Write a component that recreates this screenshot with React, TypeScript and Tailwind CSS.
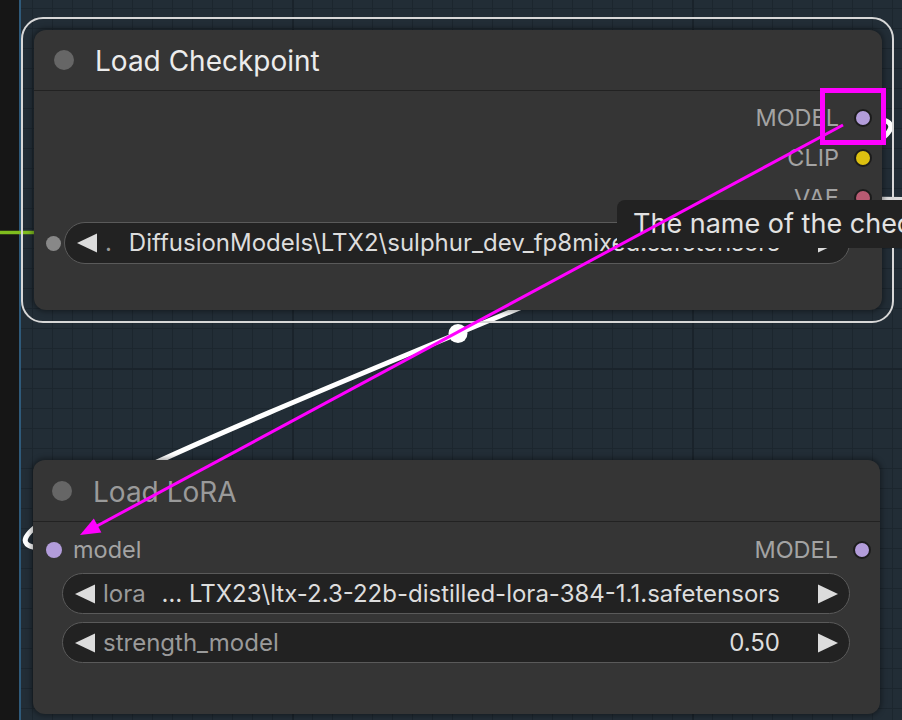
import React from 'react';

const OUTPUTS = [
  { name: 'MODEL', dot: 'bg-[#b39ddb]' },
  { name: 'CLIP', dot: 'bg-[#dcc010]' },
  { name: 'VAE', dot: 'bg-[#b85a72]' },
];

const Tri = ({ dir }: { dir: 'left' | 'right' }) => (
  <svg width="20" height="20" viewBox="0 0 20 20" className="shrink-0">
    {dir === 'left' ? (
      <path d="M0 10 L20 0.5 L20 19.5 Z" fill="#dcdcdc" />
    ) : (
      <path d="M20 10 L0 0.5 L0 19.5 Z" fill="#dcdcdc" />
    )}
  </svg>
);

const Widget = ({ label, value, h }: { label: string; value: string; h: string }) => (
  <div
    className={`flex-1 min-w-0 ${h} rounded-full bg-[#222222] border border-[#5a5a5a] flex items-center pl-[12px] pr-[11px] text-[24px] whitespace-nowrap`}
  >
    <Tri dir="left" />
    <span className="ml-[8px] text-[#9a9a9a] shrink-0">{label}</span>
    <span className="flex-1 min-w-0 ml-[10px] text-right text-[#dddddd] overflow-hidden">{value}</span>
    <span className="ml-[38px] flex">
      <Tri dir="right" />
    </span>
  </div>
);

const OutDot = ({ cls }: { cls: string }) => (
  <span className={`w-[18px] h-[18px] rounded-full border-2 border-[#1c1c1c] shrink-0 ${cls}`} />
);

export default function App() {
  return (
    <div className="relative w-[902px] h-[720px] overflow-hidden flex font-['Inter','Noto_Sans',sans-serif]">
      {/* side strip + canvas grid */}
      <div className="w-[19px] h-full bg-[#161616]" />
      <div className="w-[2px] h-full bg-[#2f5a7a]" />
      <div className="flex-1 h-full bg-[#222d36] [background-image:linear-gradient(to_right,#1a232b_2px,transparent_2px),linear-gradient(to_bottom,#1a232b_2px,transparent_2px),linear-gradient(to_right,#1c262e_1px,transparent_1px),linear-gradient(to_bottom,#1c262e_1px,transparent_1px)] [background-size:400px_400px,400px_400px,20px_20px,20px_20px] [background-position:271px_368px,271px_368px,11px_8px,11px_8px]" />

      {/* links */}
      <svg className="absolute inset-0 pointer-events-none" width="902" height="720">
        <line x1="0" y1="232.5" x2="50" y2="232.5" stroke="#7fbd1e" strokeWidth="3.5" />
        <line x1="863" y1="198.5" x2="902" y2="199" stroke="#dcdcdc" strokeWidth="4" />
        <path d="M 863 118 C 1092 118, -176 549, 53 549" fill="none" stroke="#ffffff" strokeWidth="5" />
        <circle cx="458" cy="333.5" r="9.5" fill="#ffffff" />
      </svg>

      {/* selection outline */}
      <div className="absolute left-[21px] top-[17px] w-[873px] h-[306px] rounded-[22px] border-2 border-[#d8d8d8]" />

      {/* Load Checkpoint */}
      <div className="absolute left-[34px] top-[30px] w-[848px] h-[280px] rounded-[12px] bg-[#353535] shadow-[0_0_5px_2px_rgba(0,0,0,0.35)] flex flex-col">
        <div className="h-[61px] shrink-0 flex items-center pl-[20px] gap-[21px] border-b border-[#222222]">
          <span className="w-[20px] h-[20px] rounded-full bg-[#666666]" />
          <span className="text-[28px] text-[#ececec] pt-[2px]">Load Checkpoint</span>
        </div>
        <div className="flex flex-col pt-[7px]">
          {OUTPUTS.map((o) => (
            <div key={o.name} className="h-[40px] flex items-center justify-end pr-[10px] gap-[15px]">
              <span className="text-[23.5px] text-[#a3a3a3]">{o.name}</span>
              <OutDot cls={o.dot} />
            </div>
          ))}
          <div className="mt-[4px] flex items-center pl-[12px] pr-[32px] gap-[3px]">
            <span className="w-[15px] h-[15px] rounded-full bg-[#888888] shrink-0" />
            <Widget h="h-[42px]" label="." value="DiffusionModels\LTX2\sulphur_dev_fp8mixed.safetensors" />
          </div>
        </div>
      </div>

      {/* Load LoRA */}
      <div className="absolute left-[33px] top-[460px] w-[847px] h-[254px] rounded-[12px] bg-[#353535] shadow-[0_0_5px_2px_rgba(0,0,0,0.35)] flex flex-col">
        <div className="h-[62px] shrink-0 flex items-center pl-[19px] gap-[21px] border-b border-[#222222]">
          <span className="w-[20px] h-[20px] rounded-full bg-[#666666]" />
          <span className="text-[28px] text-[#9a9a9a] pt-[2px]">Load LoRA</span>
        </div>
        <div className="flex flex-col pt-[8px]">
          <div className="h-[40px] flex items-center justify-between pl-[13px] pr-[9px]">
            <div className="flex items-center gap-[11px]">
              <span className="w-[16px] h-[16px] rounded-full bg-[#b39ddb]" />
              <span className="text-[23.5px] text-[#a3a3a3]">model</span>
            </div>
            <div className="flex items-center gap-[15px]">
              <span className="text-[23.5px] text-[#a3a3a3]">MODEL</span>
              <OutDot cls="bg-[#b39ddb]" />
            </div>
          </div>
          <div className="mt-[3px] flex pl-[29px] pr-[30px]">
            <Widget h="h-[41px]" label="lora" value="… LTX23\ltx-2.3-22b-distilled-lora-384-1.1.safetensors" />
          </div>
          <div className="mt-[8px] flex pl-[29px] pr-[30px]">
            <Widget h="h-[41px]" label="strength_model" value="0.50" />
          </div>
        </div>
      </div>

      {/* tooltip */}
      <div className="absolute left-[617px] top-[200px] h-[48px] w-[420px] rounded-[8px] bg-[#222222] flex items-center pl-[16px] whitespace-nowrap text-[27px] text-[#e2e2e2]">
        The name of the checkpoint (model) to load.
      </div>

      {/* annotation */}
      <svg className="absolute inset-0 pointer-events-none" width="902" height="720">
        <rect x="822.5" y="90.5" width="61" height="52" fill="none" stroke="#ff00ff" strokeWidth="5" />
        <line x1="843" y1="125" x2="95" y2="527" stroke="#ff00ff" strokeWidth="3" />
        <polygon points="80,535 101.4,532.5 93.8,518.5" fill="#ff00ff" />
      </svg>
    </div>
  );
}
